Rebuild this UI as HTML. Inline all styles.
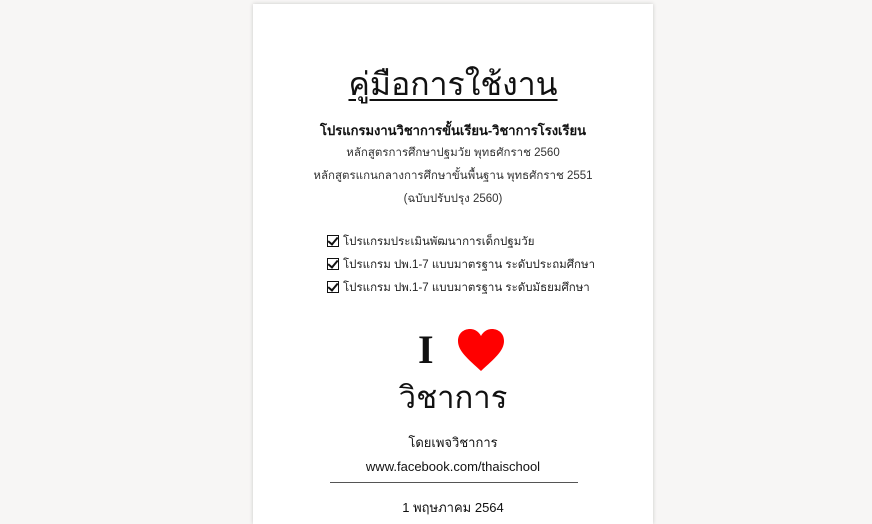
<!DOCTYPE html>
<html><head><meta charset="utf-8"><style>
html,body{margin:0;padding:0;width:872px;height:511px;overflow:hidden;background:#f7f6f5;font-family:"Liberation Sans","Tahoma",sans-serif;color:#111}
.card{position:absolute;left:253px;top:4px;width:400px;height:520px;background:#fff;box-shadow:0 0 4px rgba(0,0,0,.18)}
.c{position:absolute;left:0;width:400px;text-align:center;white-space:nowrap}
.t{top:60px;font-size:32px;text-decoration:underline;text-decoration-thickness:2px;text-underline-offset:4px;line-height:40px}
.s{font-size:13px;font-weight:bold;top:116px}
.m{font-size:11.5px;color:#333}
.l{position:absolute;left:74px;font-size:11.5px;color:#222;white-space:nowrap}
.cb{display:inline-block;width:10px;height:10px;border:1.5px solid #111;vertical-align:-2px;margin-right:4px;position:relative}
.cb:after{content:"";position:absolute;left:2px;top:-1px;width:4px;height:8px;border:solid #111;border-width:0 2px 2px 0;transform:rotate(40deg)}
</style></head><body>
<div class="card">
<div class="c t">คู่มือการใช้งาน</div>
<div class="c s">โปรแกรมงานวิชาการขั้นเรียน-วิชาการโรงเรียน</div>
<div class="c m" style="top:140px">หลักสูตรการศึกษาปฐมวัย พุทธศักราช 2560</div>
<div class="c m" style="top:163px">หลักสูตรแกนกลางการศึกษาขั้นพื้นฐาน พุทธศักราช 2551</div>
<div class="c m" style="top:186px">(ฉบับปรับปรุง 2560)</div>
<div class="l" style="top:229px"><span class="cb"></span>โปรแกรมประเมินพัฒนาการเด็กปฐมวัย</div>
<div class="l" style="top:252px"><span class="cb"></span>โปรแกรม ปพ.1-7 แบบมาตรฐาน ระดับประถมศึกษา</div>
<div class="l" style="top:275px"><span class="cb"></span>โปรแกรม ปพ.1-7 แบบมาตรฐาน ระดับมัธยมศึกษา</div>
<div style="position:absolute;left:165px;top:327px;font:bold 40px 'Liberation Serif',serif;line-height:38px">I</div>
<svg style="position:absolute;left:205px;top:325px" width="46" height="42" viewBox="0 0 46 42"><path d="M23 42 C10 30 0 22 0 12 C0 4 6 0 12 0 C17 0 21 3 23 7 C25 3 29 0 34 0 C40 0 46 4 46 12 C46 22 36 30 23 42Z" fill="#f00"/></svg>
<div class="c" style="top:372px;font-size:31px;font-weight:300;line-height:44px">วิชาการ</div>
<div class="c" style="top:428px;font-size:13px">โดยเพจวิชาการ</div>
<div class="c" style="top:455px;font-size:13px">www.facebook.com/thaischool</div>
<div style="position:absolute;left:77px;top:478px;width:248px;height:1px;background:#555"></div>
<div class="c" style="top:493px;font-size:13px">1 พฤษภาคม 2564</div>
</div>
</body></html>
